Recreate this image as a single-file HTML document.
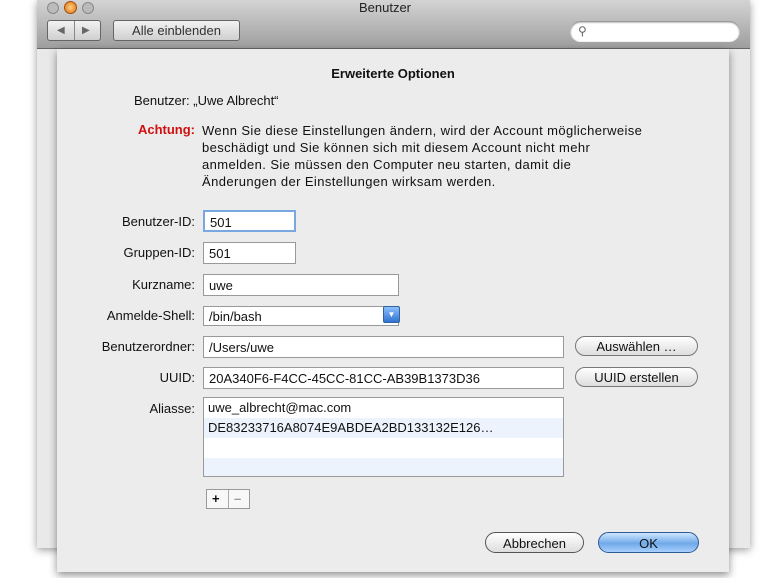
<!DOCTYPE html>
<html><head><meta charset="utf-8"><style>
body{margin:0;width:770px;height:578px;background:#fff;font-family:"Liberation Sans",sans-serif;font-size:13px;color:#111;position:relative;overflow:hidden}
.a{position:absolute}
.win{left:37px;top:0;width:713px;height:548px;background:#e9e9e9;box-shadow:0 2px 8px rgba(0,0,0,.4)}
.tb{left:37px;top:0;width:713px;height:48px;background:linear-gradient(#d4d4d4,#9e9e9e);border-bottom:1px solid #666}
.sheet{left:57px;top:49px;width:672px;height:523px;background:#ececec;box-shadow:0 3px 8px rgba(0,0,0,.45)}
.lbl{text-align:right;width:140px;left:55px}
.inp{background:#fff;border:1px solid #999;box-sizing:border-box;height:22px;padding:3px 5px;font-size:13px}
.btn{border:1px solid #777;border-radius:12px;background:linear-gradient(#fff,#ddd);text-align:center;height:20px;line-height:20px;box-sizing:border-box}
</style></head><body>
<div class="a win"></div>
<div class="a tb"></div>
<div class="a" style="left:47px;top:2px;width:10px;height:10px;border-radius:50%;background:#bbb;border:1px solid #888"></div>
<div class="a" style="left:64px;top:1px;width:11px;height:11px;border-radius:50%;background:radial-gradient(#ffd080,#e07010);border:1px solid #a05010"></div>
<div class="a" style="left:82px;top:2px;width:10px;height:10px;border-radius:50%;background:#bbb;border:1px solid #888"></div>
<div class="a" style="left:0;width:770px;top:0;text-align:center;font-size:13px;color:#222">Benutzer</div>
<div class="a" style="left:47px;top:20px;width:54px;height:21px;border:1px solid #666;border-radius:3px;background:linear-gradient(#f2f2f2,#cfcfcf);box-sizing:border-box;font-size:10px;color:#666;line-height:19px"><span style="position:absolute;left:9px">◀</span><span style="position:absolute;left:26px;top:0;height:19px;border-left:1px solid #888"></span><span style="position:absolute;left:34px">▶</span></div>
<div class="a" style="left:113px;top:20px;width:127px;height:21px;border:1px solid #666;border-radius:3px;background:linear-gradient(#f2f2f2,#cfcfcf);box-sizing:border-box;text-align:center;line-height:19px;color:#333">Alle einblenden</div>
<div class="a" style="left:570px;top:21px;width:170px;height:21px;border-radius:11px;background:#fff;box-shadow:inset 0 1px 2px #666;font-size:12px;color:#666;line-height:21px;padding-left:8px;box-sizing:border-box">⚲</div>
<div class="a sheet"></div>
<div class="a" style="left:57px;width:672px;top:66px;text-align:center;font-weight:bold">Erweiterte Optionen</div>
<div class="a" style="left:134px;top:93px">Benutzer: „Uwe Albrecht“</div>
<div class="a lbl" style="top:122px;color:#d01010;font-weight:bold">Achtung:</div>
<div class="a" style="left:202px;top:122px;line-height:17px;white-space:nowrap;letter-spacing:0.4px">Wenn Sie diese Einstellungen ändern, wird der Account möglicherweise<br>beschädigt und Sie können sich mit diesem Account nicht mehr<br>anmelden. Sie müssen den Computer neu starten, damit die<br>Änderungen der Einstellungen wirksam werden.</div>
<div class="a lbl" style="top:214px">Benutzer-ID:</div>
<div class="a inp" style="left:203px;top:210px;width:93px;border:2px solid #7aa7e0">501</div>
<div class="a lbl" style="top:245px">Gruppen-ID:</div>
<div class="a inp" style="left:203px;top:242px;width:93px">501</div>
<div class="a lbl" style="top:277px">Kurzname:</div>
<div class="a inp" style="left:203px;top:274px;width:196px">uwe</div>
<div class="a lbl" style="top:308px">Anmelde-Shell:</div>
<div class="a inp" style="left:203px;top:306px;width:196px;height:20px;padding-top:2px">/bin/bash</div>
<div class="a" style="left:383px;top:306px;width:15px;height:15px;background:linear-gradient(#8cc0ff,#2f74d0);border:1px solid #35629a;border-radius:2px;color:#fff;font-size:8px;text-align:center;line-height:15px">▼</div>
<div class="a lbl" style="top:339px">Benutzerordner:</div>
<div class="a inp" style="left:203px;top:336px;width:361px">/Users/uwe</div>
<div class="a btn" style="left:575px;top:336px;width:123px">Auswählen …</div>
<div class="a lbl" style="top:370px">UUID:</div>
<div class="a inp" style="left:203px;top:367px;width:361px">20A340F6-F4CC-45CC-81CC-AB39B1373D36</div>
<div class="a btn" style="left:575px;top:367px;width:123px">UUID erstellen</div>
<div class="a lbl" style="top:401px">Aliasse:</div>
<div class="a" style="left:203px;top:397px;width:361px;height:80px;background:#fff;border:1px solid #999;box-sizing:border-box">
<div style="height:20px;padding-left:4px;line-height:20px">uwe_albrecht@mac.com</div>
<div style="height:20px;padding-left:4px;line-height:20px;background:#edf3fd">DE83233716A8074E9ABDEA2BD133132E126…</div>
<div style="height:20px"></div>
<div style="height:18px;background:#edf3fd"></div></div>
<div class="a" style="left:206px;top:489px;width:44px;height:20px;border:1px solid #999;background:#f8f8f8;box-sizing:border-box;font-weight:bold;line-height:18px"><span style="position:absolute;left:5px">+</span><span style="position:absolute;left:21px;top:0;height:18px;border-left:1px solid #aaa"></span><span style="position:absolute;left:27px;color:#999">–</span></div>
<div class="a btn" style="left:485px;top:532px;width:99px;height:21px;line-height:21px;border-color:#555">Abbrechen</div>
<div class="a btn" style="left:598px;top:532px;width:101px;height:21px;line-height:21px;border-color:#2d5a95;background:linear-gradient(#cfe6ff,#6fa9e8 55%,#a9d0ff)">OK</div>
</body></html>
